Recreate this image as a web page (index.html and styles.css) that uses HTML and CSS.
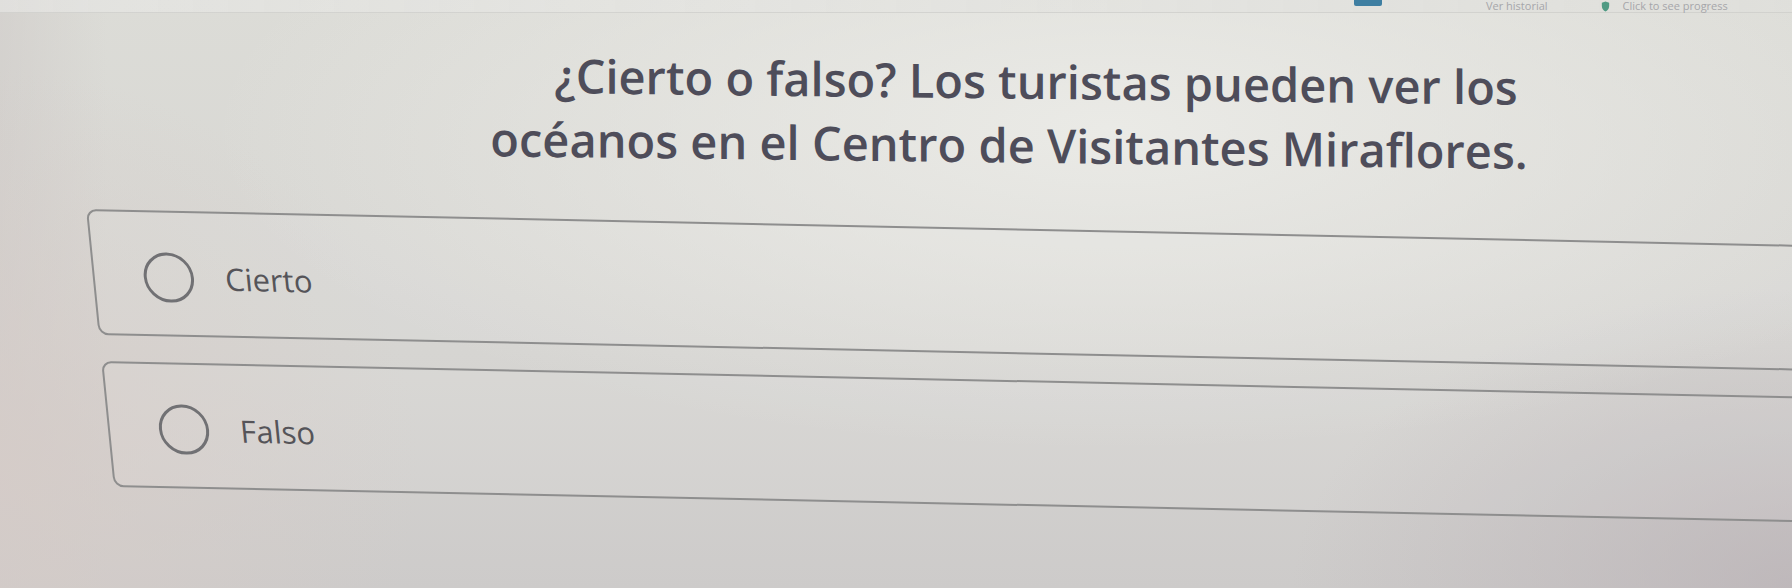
FILE: index.html
```html
<!DOCTYPE html>
<html lang="es">
<head>
<meta charset="utf-8">
<title>Cierto o falso</title>
<link rel="stylesheet" href="styles.css">
</head>
<body>
<div class="top-bar">
  <span class="tb-blue"></span>
  <span class="tb-text">Ver historial</span>
  <svg class="tb-shield" viewBox="0 0 20 24" width="11" height="11"><path d="M10 1 L18 4 V11 C18 17 14 21 10 23 C6 21 2 17 2 11 V4 Z" fill="#4f9a83"/></svg>
  <span class="tb-text">Click to see progress</span>
</div>
<main class="quiz">
  <h1 class="question">¿Cierto o falso? Los turistas pueden ver los océanos en el Centro de Visitantes Miraflores.</h1>
  <div class="options">
    <label class="option">
      <span class="radio"></span>
      <span class="option-label">Cierto</span>
    </label>
    <label class="option">
      <span class="radio"></span>
      <span class="option-label">Falso</span>
    </label>
  </div>
</main>
</body>
</html>
```
FILE: styles.css
```css
html, body {
  margin: 0;
  padding: 0;
}
body {
  width: 1792px;
  height: 588px;
  overflow: hidden;
  font-family: "Open Sans", "Noto Sans", sans-serif;
  background:
    radial-gradient(ellipse 900px 320px at 62% 22%, rgba(236,236,232,0.9), rgba(236,236,232,0) 100%),
    radial-gradient(ellipse 500px 300px at 100% 100%, rgba(184,176,180,0.7), rgba(184,176,180,0) 100%),
    radial-gradient(ellipse 420px 400px at 0% 80%, rgba(214,204,200,0.8), rgba(214,204,200,0) 100%),
    linear-gradient(90deg, rgba(205,200,198,0.5) 0%, rgba(205,200,198,0) 6%),
    linear-gradient(180deg, #dcdcd7 0%, #d6d5d2 60%, #cdcbca 100%);
}
.top-bar {
  height: 12px;
  display: flex;
  align-items: center;
  padding-left: 1354px;
  background: linear-gradient(90deg, rgba(232,232,230,0.6), rgba(224,224,220,0.8));
  border-bottom: 1px solid rgba(200,200,196,0.6);
}
.tb-blue {
  width: 28px;
  height: 6px;
  align-self: flex-start;
  background: #3f7fa2;
  border-radius: 0 0 2px 2px;
  margin-right: 104px;
}
.tb-text {
  font-size: 11px;
  line-height: 12px;
  color: #a6a6aa;
  white-space: nowrap;
}
.tb-shield {
  flex: none;
  margin: 0 12px 0 52px;
}
.quiz {
  width: 1872px;
  padding-left: 86px;
}
.question {
  margin: 29px 0 0 378px;
  width: 1090px;
  text-align: center;
  text-indent: 54px;
  font-size: 47px;
  line-height: 64px;
  font-weight: 600;
  color: #4e4d5a;
  transform-origin: 0 0;
  transform: skewY(0.7deg);
}
.options {
  margin-top: 39px;
  display: flex;
  flex-direction: column;
  gap: 26px;
  transform-origin: 0 0;
  transform: skewX(5.7deg) skewY(1.2deg);
}
.option {
  height: 126px;
  box-sizing: border-box;
  display: flex;
  align-items: center;
  gap: 31px;
  padding: 8px 0 0 49px;
  border: 2px solid #8e8e8e;
  border-radius: 10px;
  background: rgba(255,255,255,0.07);
}
.radio {
  width: 50px;
  height: 50px;
  box-sizing: border-box;
  border: 3px solid #717174;
  border-radius: 50%;
  flex: none;
}
.option-label {
  font-size: 31px;
  color: #555459;
  font-weight: 500;
}
```
